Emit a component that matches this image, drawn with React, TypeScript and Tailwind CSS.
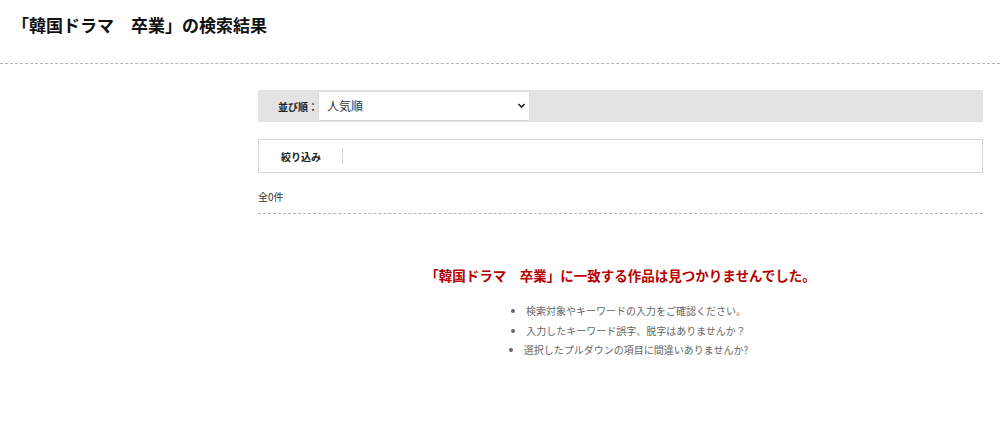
const tips = [
  "検索対象やキーワードの入力をご確認ください。",
  "入力したキーワード誤字、脱字はありませんか？",
  "選択したプルダウンの項目に間違いありませんか?",
];

const App = () => {
  return (
    <div
      className="min-h-[434px] w-full bg-white text-[#222]"
      style={{ fontFamily: '"Noto Sans CJK JP", "Liberation Sans", sans-serif' }}
    >
      {/* HEADER */}
      <div className="flex h-[64px] items-start border-b border-dashed border-[#b5b5b5] px-[12px] pt-[12px]">
        <h1 className="text-[17px] font-bold leading-[25px] text-[#111]">
          「韓国ドラマ　卒業」の検索結果
        </h1>
      </div>

      {/* RESULTS */}
      <div className="pl-[258px] pr-[17px] pt-[26px]">
        {/* SORT */}
        <div className="flex h-[32px] items-center bg-[#e3e3e3]">
          <span className="w-[60px] shrink-0 whitespace-nowrap pl-[20px] text-[10px] font-bold">
            並び順：
          </span>
          <div className="relative h-[30px] w-[212px] shrink-0">
            <select
              defaultValue="popular"
              className="h-full w-full appearance-none border border-[#dadada] bg-white pl-[8px] text-[12px] text-[#333] outline-none"
            >
              <option value="popular">人気順</option>
              <option value="new">新着順</option>
            </select>
            <svg
              className="pointer-events-none absolute right-[4px] top-[11px]"
              width="9"
              height="7"
              viewBox="0 0 9 7"
            >
              <path d="M1.5 2 L4.5 5 L7.5 2" fill="none" stroke="#222" strokeWidth="1.6" />
            </svg>
          </div>
        </div>

        {/* FILTER */}
        <div className="mt-[17px] flex h-[34px] items-center border border-[#d6d6d6]">
          <span className="pl-[22px] pr-[21px] text-[10px] font-bold">絞り込み</span>
          <span className="h-[16px] w-px bg-[#d6d6d6]" />
        </div>

        {/* COUNT */}
        <p className="mt-[17px] text-[10px] leading-[14px] text-[#333]">全0件</p>
        <div className="mt-[9px] border-b border-dashed border-[#b5b5b5]" />

        {/* EMPTY */}
        <p className="mt-[51px] text-center text-[13.5px] font-bold leading-[20px] text-[#b80000]">
          「韓国ドラマ　卒業」に一致する作品は見つかりませんでした。
        </p>
        <ul className="mt-[16px] list-inside list-disc pl-[16px] text-center text-[10px] leading-[19.5px] text-[#666]">
          {tips.map((tip) => (
            <li key={tip}>{tip}</li>
          ))}
        </ul>
      </div>
    </div>
  );
};

export default App;
